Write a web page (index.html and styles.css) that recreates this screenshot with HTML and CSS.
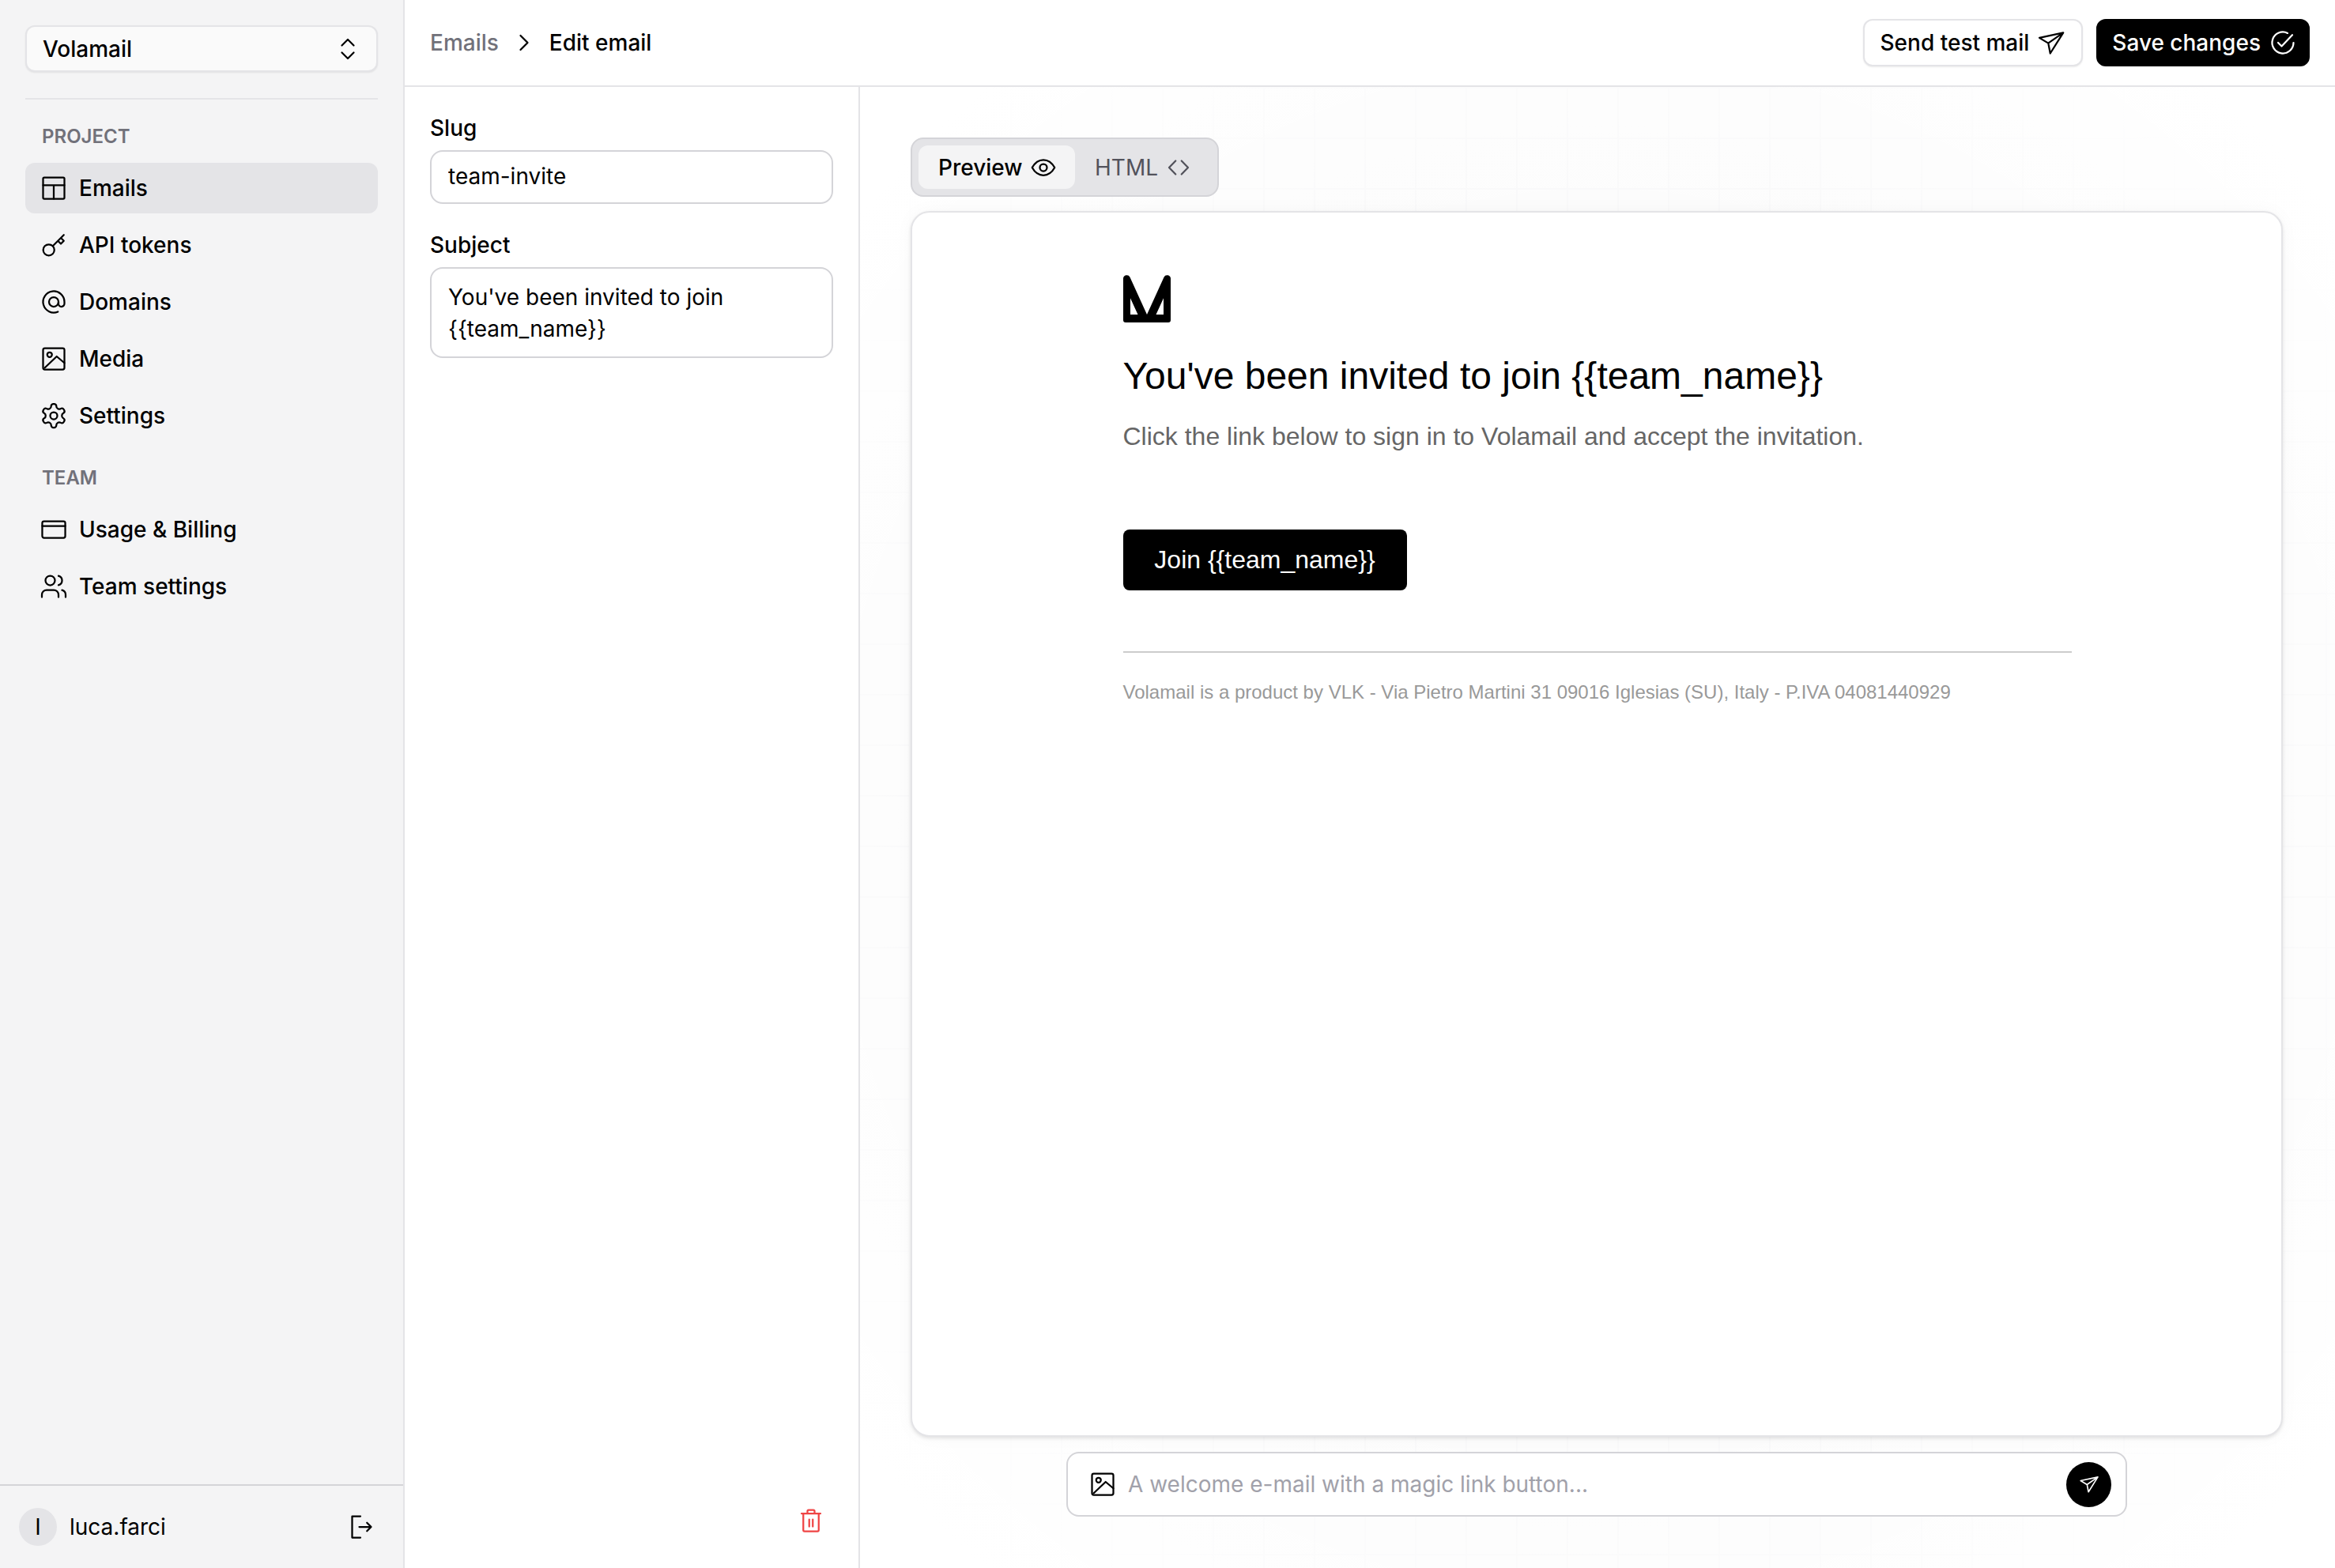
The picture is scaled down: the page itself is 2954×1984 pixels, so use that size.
FILE: index.html
```html
<!DOCTYPE html>
<html lang="en">
<head>
    <meta charset="UTF-8">
    <meta name="viewport" content="width=device-width, initial-scale=1.0">
    <title>Edit email - Volamail</title>
    <link rel="stylesheet" href="styles.css">
</head>
<body>
    <div class="app">
        <aside class="sidebar">
            <div class="sidebar-top">
                <button class="project-select" type="button">
                    <span>Volamail</span>
                    <svg class="icon" viewBox="0 0 24 24"><path d="M7 9l5-5 5 5M7 15l5 5 5-5"/></svg>
                </button>
                <div class="sidebar-divider"></div>

                <div class="nav-label">PROJECT</div>
                <nav class="nav-list">
                    <a class="nav-item active">
                        <svg class="icon" viewBox="0 0 24 24"><rect x="3" y="3" width="18" height="18" rx="1"/><path d="M3 9.5h18M12 9.5V21"/></svg>
                        <span>Emails</span>
                    </a>
                    <a class="nav-item">
                        <svg class="icon" viewBox="0 0 24 24"><circle cx="7.8" cy="16.2" r="4.7"/><path d="M11.2 12.8l9.3-9.3M15.5 8.5l2.5 2.5 2.5-2.5-2.5-2.5"/></svg>
                        <span>API tokens</span>
                    </a>
                    <a class="nav-item">
                        <svg class="icon" viewBox="0 0 24 24"><circle cx="12" cy="12" r="4"/><path d="M16 12v1.5a2.5 2.5 0 005 0V12a9 9 0 10-5.5 8.3"/></svg>
                        <span>Domains</span>
                    </a>
                    <a class="nav-item">
                        <svg class="icon" viewBox="0 0 24 24"><rect x="3" y="3" width="18" height="18" rx="1.5"/><circle cx="8.5" cy="8.5" r="2"/><path d="M4.5 19.5L14.5 10l6.5 5.5"/></svg>
                        <span>Media</span>
                    </a>
                    <a class="nav-item">
                        <svg class="icon" viewBox="0 0 24 24"><path d="M12.22 2h-.44a2 2 0 0 0-2 2v.18a2 2 0 0 1-1 1.73l-.43.25a2 2 0 0 1-2 0l-.15-.08a2 2 0 0 0-2.73.73l-.22.38a2 2 0 0 0 .73 2.73l.15.1a2 2 0 0 1 1 1.72v.51a2 2 0 0 1-1 1.74l-.15.09a2 2 0 0 0-.73 2.73l.22.38a2 2 0 0 0 2.73.73l.15-.08a2 2 0 0 1 2 0l.43.25a2 2 0 0 1 1 1.73V20a2 2 0 0 0 2 2h.44a2 2 0 0 0 2-2v-.18a2 2 0 0 1 1-1.73l.43-.25a2 2 0 0 1 2 0l.15.08a2 2 0 0 0 2.73-.73l.22-.39a2 2 0 0 0-.73-2.73l-.15-.08a2 2 0 0 1-1-1.74v-.5a2 2 0 0 1 1-1.74l.15-.09a2 2 0 0 0 .73-2.73l-.22-.38a2 2 0 0 0-2.73-.73l-.15.08a2 2 0 0 1-2 0l-.43-.25a2 2 0 0 1-1-1.73V4a2 2 0 0 0-2-2z"/><circle cx="12" cy="12" r="3"/></svg>
                        <span>Settings</span>
                    </a>
                </nav>

                <div class="nav-label">TEAM</div>
                <nav class="nav-list">
                    <a class="nav-item">
                        <svg class="icon" viewBox="0 0 24 24"><rect x="2.3" y="5" width="19.4" height="14" rx="1.5"/><path d="M2.3 9h19.4"/></svg>
                        <span>Usage &amp; Billing</span>
                    </a>
                    <a class="nav-item">
                        <svg class="icon" viewBox="0 0 24 24"><circle cx="9" cy="7" r="4"/><path d="M16 21v-2a4 4 0 0 0-4-4H6a4 4 0 0 0-4 4v2M22 21v-2a4 4 0 0 0-3-3.87M16 3.13a4 4 0 0 1 0 7.75"/></svg>
                        <span>Team settings</span>
                    </a>
                </nav>
            </div>

            <div class="user-row">
                <div class="avatar">I</div>
                <div class="user-name">luca.farci</div>
                <svg class="icon" viewBox="0 0 24 24"><path d="M12 3H5v18h7M11 12h10M17.5 8.5L21 12l-3.5 3.5"/></svg>
            </div>
        </aside>

        <div class="page">
            <header class="topbar">
                <div class="breadcrumb">
                    <span class="crumb-muted">Emails</span>
                    <svg class="icon" viewBox="0 0 24 24"><path d="M9 6l6 6-6 6"/></svg>
                    <span>Edit email</span>
                </div>
                <div class="topbar-actions">
                    <button class="btn btn-outline" type="button">
                        Send test mail
                        <svg class="icon" viewBox="0 0 24 24"><path d="M22.152 3.553L11.178 21.004l-1.67-8.596L2 7.898l20.152-4.345zM9.456 12.444l12.696-8.89"/></svg>
                    </button>
                    <button class="btn btn-black" type="button">
                        Save changes
                        <svg class="icon" viewBox="0 0 24 24"><path d="M8 12l3 3 9-9.5M21 12a9 9 0 11-5-8.06"/></svg>
                    </button>
                </div>
            </header>

            <div class="content">
                <form class="meta-panel">
                    <label class="field-label" for="slug">Slug</label>
                    <input class="field-input" type="text" id="slug" value="team-invite">
                    <label class="field-label subject-label" for="subject">Subject</label>
                    <textarea class="field-input field-area" id="subject">You've been invited to join {{team_name}}</textarea>
                    <button class="delete-btn" type="button">
                        <svg class="icon" viewBox="0 0 24 24"><path d="M4 6h16M9 6V4a1 1 0 011-1h4a1 1 0 011 1v2M5.5 6v14a1 1 0 001 1h11a1 1 0 001-1V6M10.5 11v6M13.5 11v6"/></svg>
                    </button>
                </form>

                <main class="canvas">
                    <div class="tabs">
                        <div class="tab tab-active">
                            Preview
                            <svg class="icon" viewBox="0 0 24 24"><path d="M2.5 12C5 7.5 8.5 5.5 12 5.5s7 2 9.5 6.5c-2.5 4.5-6 6.5-9.5 6.5S5 16.5 2.5 12z"/><circle cx="12" cy="12" r="3"/></svg>
                        </div>
                        <div class="tab tab-html">
                            HTML
                            <svg class="icon" viewBox="0 0 24 24"><path d="M9.5 6.3L4 12l5.5 5.7M14.5 6.3L20 12l-5.5 5.7"/></svg>
                        </div>
                    </div>

                    <section class="preview-card">
                        <div class="mail">
                            <svg class="mail-logo" viewBox="0 0 60 60"><path fill-rule="evenodd" d="M0 4.5A4.500 4.500 0 0 1 8.500 2.700L30 50 51.500 2.700A4.500 4.500 0 0 1 60 4.500V57q0 3-3 3H3q-3 0-3-3zM9 29.300V50h9.500zM51 29.300L41.500 50H51z"/></svg>
                            <h1 class="mail-title">You've been invited to join {{team_name}}</h1>
                            <p class="mail-text">Click the link below to sign in to Volamail and accept the invitation.</p>
                            <a class="mail-btn">Join {{team_name}}</a>
                            <hr class="mail-rule">
                            <p class="mail-foot">Volamail is a product by VLK - Via Pietro Martini 31 09016 Iglesias (SU), Italy - P.IVA 04081440929</p>
                        </div>
                    </section>

                    <div class="prompt">
                        <svg class="icon" viewBox="0 0 24 24"><rect x="3" y="3" width="18" height="18" rx="1.5"/><circle cx="8.5" cy="8.5" r="2"/><path d="M4.5 19.5L14.5 10l6.5 5.5"/></svg>
                        <input class="prompt-input" type="text" placeholder="A welcome e-mail with a magic link button...">
                        <button class="prompt-send" type="button">
                            <svg class="icon" viewBox="0 0 24 24"><path d="M22.152 3.553L11.178 21.004l-1.67-8.596L2 7.898l20.152-4.345zM9.456 12.444l12.696-8.89"/></svg>
                        </button>
                    </div>
                </main>
            </div>
        </div>
    </div>
</body>
</html>
```
FILE: styles.css
```css
* {
    box-sizing: border-box;
}

html, body {
    margin: 0;
    height: 100%;
}

body {
    font-family: Inter, "Noto Sans", sans-serif;
    font-size: 28px;
    color: #000;
    background-color: #fff;
}

button, input, textarea {
    font: inherit;
    color: inherit;
}

.icon {
    width: 36px;
    height: 36px;
    flex: none;
    fill: none;
    stroke: currentColor;
    stroke-width: 1.5;
    stroke-linecap: round;
    stroke-linejoin: round;
}

.app {
    display: flex;
    height: 100vh;
    overflow: hidden;
}

/* sidebar */
.sidebar {
    width: 512px;
    flex: none;
    display: flex;
    flex-direction: column;
    justify-content: space-between;
    background-color: #f4f4f5;
    border-right: 2px solid #e4e4e7;
}

.sidebar-top {
    padding: 32px 32px 0;
}

.project-select {
    width: 100%;
    height: 59px;
    display: flex;
    align-items: center;
    justify-content: space-between;
    padding: 0 18px 0 20px;
    background-color: #fafafa;
    border: 2px solid #e4e4e7;
    border-radius: 12px;
    box-shadow: 0 1px 2px rgba(0, 0, 0, 0.08);
    font-weight: 500;
}

.sidebar-divider {
    height: 2px;
    margin-top: 33px;
    background-color: #e4e4e7;
}

.nav-label {
    margin-top: 31px;
    margin-bottom: 17px;
    padding-left: 21px;
    line-height: 32px;
    font-size: 24px;
    font-weight: 600;
    color: #71717a;
}

.nav-list {
    display: flex;
    flex-direction: column;
    gap: 8px;
}

.nav-item {
    height: 64px;
    display: flex;
    align-items: center;
    gap: 14px;
    padding-left: 18px;
    border-radius: 12px;
    font-weight: 500;
}

.nav-item.active {
    background-color: #e4e4e7;
}

.user-row {
    height: 106px;
    display: flex;
    align-items: center;
    padding: 0 36px 0 24px;
    border-top: 2px solid #d4d4d8;
}

.avatar {
    width: 48px;
    height: 48px;
    display: flex;
    align-items: center;
    justify-content: center;
    border-radius: 50%;
    background-color: #e4e4e7;
}

.user-name {
    flex: 1;
    margin-left: 16px;
}

/* top bar */
.page {
    flex: 1;
    min-width: 0;
    display: flex;
    flex-direction: column;
}

.topbar {
    height: 110px;
    flex: none;
    display: flex;
    align-items: center;
    justify-content: space-between;
    padding: 0 32px;
    border-bottom: 2px solid #e4e4e7;
}

.breadcrumb {
    display: flex;
    align-items: center;
    gap: 14px;
    font-weight: 500;
}

.crumb-muted {
    color: #71717a;
}

.topbar-actions {
    display: flex;
    gap: 17px;
}

.btn {
    height: 60px;
    display: flex;
    align-items: center;
    gap: 10px;
    padding: 0 20px;
    border-radius: 12px;
    font-weight: 500;
}

.btn-outline {
    background-color: #fff;
    border: 2px solid #e4e4e7;
    box-shadow: 0 1px 2px rgba(0, 0, 0, 0.08);
}

.btn-black {
    padding: 0 14px 0 18px;
    background-color: #000;
    border: 2px solid #000;
    color: #fff;
}

/* slug and subject */
.content {
    flex: 1;
    min-height: 0;
    display: flex;
}

.meta-panel {
    width: 576px;
    flex: none;
    display: flex;
    flex-direction: column;
    padding: 34px 32px 42px;
    border-right: 2px solid #e4e4e7;
}

.field-label {
    line-height: 36px;
    margin-bottom: 10px;
    font-weight: 500;
}

.subject-label {
    margin-top: 34px;
}

.field-input {
    width: 100%;
    height: 68px;
    padding: 0 21px 2px;
    background-color: #fff;
    border: 2px solid #d4d4d8;
    border-radius: 16px;
    outline: none;
}

.field-area {
    height: 115px;
    padding: 16px 21px 0;
    line-height: 40px;
    resize: none;
    overflow: hidden;
}

.delete-btn {
    margin-top: auto;
    margin-right: 10px;
    align-self: flex-end;
    display: flex;
    padding: 0;
    background: none;
    border: none;
    color: #ef4444;
}

/* preview side */
.canvas {
    flex: 1;
    min-width: 0;
    display: flex;
    flex-direction: column;
    padding: 64px 66px 65px 64px;
    background-color: #fbfbfb;
    background-image:
        radial-gradient(ellipse closest-side at 50% 50%, rgba(255, 255, 255, 0) 60%, #fff 130%),
        linear-gradient(to right, #f6f6f7 2px, transparent 2px),
        linear-gradient(to bottom, #f6f6f7 2px, transparent 2px);
    background-size: 100% 100%, 64px 64px, 64px 64px;
    background-position: 0 0, 62px 0, 62px 0;
}

.tabs {
    align-self: flex-start;
    width: 390px;
    height: 75px;
    display: flex;
    padding: 8px;
    background-color: #e4e4e7;
    border: 2px solid #d4d4d8;
    border-radius: 16px;
}

.tab {
    width: 198px;
    flex: none;
    display: flex;
    align-items: center;
    gap: 8px;
    padding-left: 25px;
    border-radius: 12px;
    color: #52525b;
}

.tab-html {
    width: 172px;
}

.tab-active {
    background-color: #f4f4f5;
    color: #000;
    font-weight: 500;
}

.preview-card {
    flex: 1;
    min-height: 0;
    margin-top: 18px;
    padding: 79px 0 0 1px;
    background-color: #fff;
    border: 2px solid #e4e4e7;
    border-radius: 24px;
    box-shadow: 0 2px 4px rgba(0, 0, 0, 0.1), 0 0 24px rgba(0, 0, 0, 0.03);
}

.mail {
    width: 1200px;
    margin: 0 auto;
    font-family: "Liberation Sans", Arial, sans-serif;
}

.mail-logo {
    display: block;
    width: 60px;
    height: 60px;
}

.mail-title {
    margin: 36px 0 0;
    line-height: 64px;
    font-size: 48px;
    font-weight: 400;
}

.mail-text {
    margin: 24px 0 0;
    line-height: 40px;
    font-size: 32px;
    color: #666;
}

.mail-btn {
    display: inline-flex;
    align-items: center;
    justify-content: center;
    width: 359px;
    height: 77px;
    margin-top: 98px;
    font-size: 32px;
    color: #fff;
    background-color: #000;
    border-radius: 8px;
}

.mail-rule {
    height: 2px;
    margin: 77px 0 0;
    border: none;
    background-color: #ccc;
}

.mail-foot {
    margin: 34px 0 0;
    line-height: 32px;
    font-size: 24px;
    color: #999;
}

.prompt {
    align-self: center;
    width: 1342px;
    height: 82px;
    flex: none;
    margin-top: 19px;
    display: flex;
    align-items: center;
    gap: 14px;
    padding: 0 18px 0 26px;
    background-color: #fff;
    border: 2px solid #d4d4d8;
    border-radius: 16px;
}

.prompt-input {
    flex: 1;
    min-width: 0;
    padding: 0;
    border: none;
    outline: none;
    background: none;
}

.prompt-input::placeholder {
    color: #a1a1aa;
    opacity: 1;
}

.prompt-send {
    width: 57px;
    height: 57px;
    display: flex;
    align-items: center;
    justify-content: center;
    padding: 0;
    border: none;
    border-radius: 50%;
    background-color: #000;
    color: #fff;
}

.prompt-send .icon {
    width: 26px;
    height: 26px;
}
```
